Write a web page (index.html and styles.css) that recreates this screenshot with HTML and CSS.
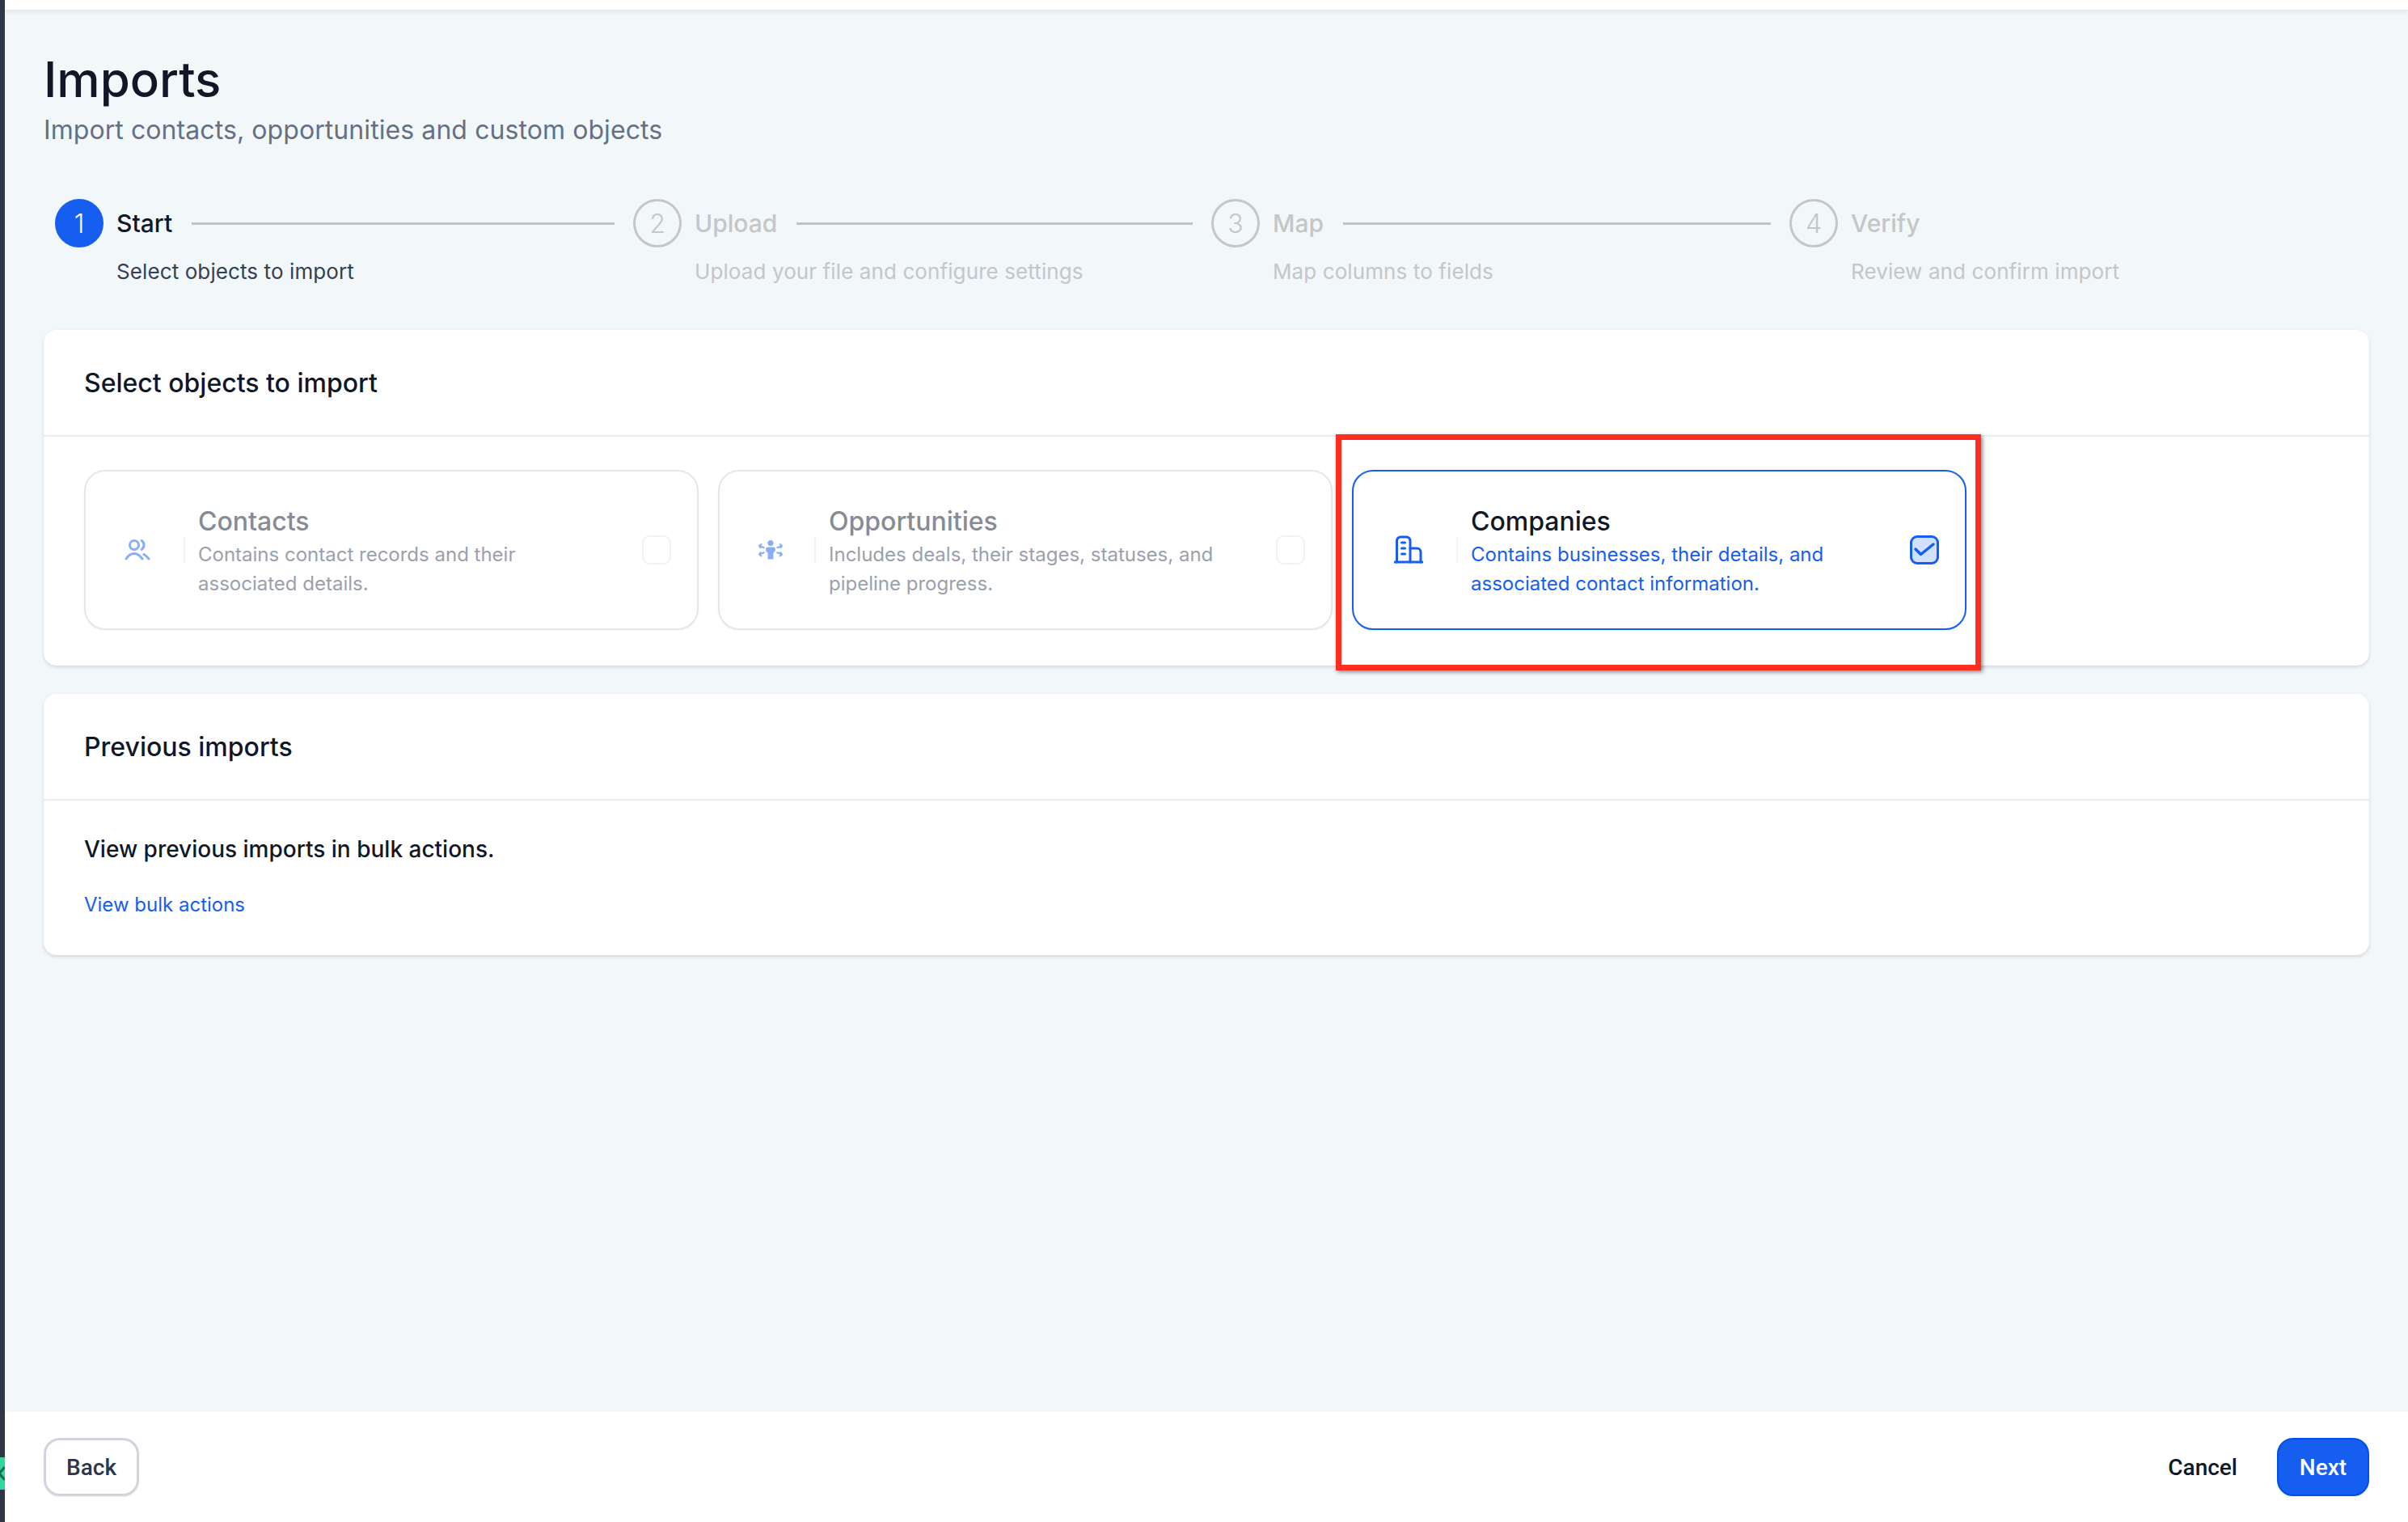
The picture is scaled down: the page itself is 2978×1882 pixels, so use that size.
FILE: index.html
```html
<!DOCTYPE html>
<html lang="en">
  <head>
    <meta charset="UTF-8" />
    <meta name="viewport" content="width=device-width, initial-scale=1.0" />
    <title>Imports</title>
    <link rel="stylesheet" href="styles.css">
  </head>
  <body>
    <div class="app">
      <div class="rail">
        <span class="rail-tab">
          <svg width="6" height="40" viewBox="0 0 6 40"><path d="M6 12 L-1 20 L6 28" fill="none" stroke="#0f6b52" stroke-width="3"/></svg>
        </span>
      </div>
      <div class="main">
        <div class="topbar"></div>
        <div class="content">
          <h1 class="title">Imports</h1>
          <p class="subtitle">Import contacts, opportunities and custom objects</p>

          <div class="steps">
            <div class="step active">
              <div class="step-row">
                <span class="step-num">1</span>
                <span class="step-name">Start</span>
                <span class="step-line"></span>
              </div>
              <div class="step-desc">Select objects to import</div>
            </div>
            <div class="step">
              <div class="step-row">
                <span class="step-num">2</span>
                <span class="step-name">Upload</span>
                <span class="step-line"></span>
              </div>
              <div class="step-desc">Upload your file and configure settings</div>
            </div>
            <div class="step">
              <div class="step-row">
                <span class="step-num">3</span>
                <span class="step-name">Map</span>
                <span class="step-line"></span>
              </div>
              <div class="step-desc">Map columns to fields</div>
            </div>
            <div class="step">
              <div class="step-row">
                <span class="step-num">4</span>
                <span class="step-name">Verify</span>
              </div>
              <div class="step-desc">Review and confirm import</div>
            </div>
          </div>

          <div class="card">
            <div class="card-head">Select objects to import</div>
            <div class="options">
              <div class="option disabled">
                <svg class="option-icon icon-contacts" width="32" height="32" viewBox="0 0 32 32" fill="none" stroke="#155eef" stroke-width="3" stroke-linecap="round">
                  <circle cx="12" cy="10" r="5.5"/>
                  <path d="M21 4.5 a6.5 6.5 0 0 1 0 11"/>
                  <path d="M2 27 C5 22.5 8.5 20.5 12 20.5 C16 20.5 19 23 22 27"/>
                  <path d="M24 21.5 C26 22.5 28 24.5 30 27"/>
                </svg>
                <span class="option-sep"></span>
                <div class="option-text">
                  <div class="option-name">Contacts</div>
                  <div class="option-desc">Contains contact records and their associated details.</div>
                </div>
                <span class="check"></span>
              </div>

              <div class="option disabled">
                <svg class="option-icon icon-opps" width="32" height="32" viewBox="0 0 32 32" fill="#155eef" stroke="none">
                  <circle cx="16" cy="7.5" r="3.6"/>
                  <path d="M13 12.5 h6 a3 3 0 0 1 3 3 c0 2-1.4 3.4-2.6 4 V27.5 h-6.8 V19.5 c-1.2-.6-2.6-2-2.6-4 a3 3 0 0 1 3-3z"/>
                  <g fill="none" stroke="#155eef" stroke-width="2">
                    <path d="M8.5 13.5 L2 11 M5 8.5 L2 11 L4 14"/>
                    <path d="M23.5 13.5 L30 11 M27 8.5 L30 11 L28 14"/>
                    <path d="M8.5 19 L2 21.5 M4 18.5 L2 21.5 L5 24"/>
                    <path d="M23.5 19 L30 21.5 M28 18.5 L30 21.5 L27 24"/>
                  </g>
                </svg>
                <span class="option-sep"></span>
                <div class="option-text">
                  <div class="option-name">Opportunities</div>
                  <div class="option-desc">Includes deals, their stages, statuses, and pipeline progress.</div>
                </div>
                <span class="check"></span>
              </div>

              <div class="option selected">
                <svg class="option-icon icon-companies" width="36" height="36" viewBox="0 0 36 36" fill="none" stroke="#155eef" stroke-width="3" stroke-linecap="round">
                  <path d="M1 33 H35"/>
                  <path d="M3.5 33 V6.5 a4.5 4.5 0 0 1 4.5-4.5 h7.5 a4.5 4.5 0 0 1 4.5 4.5 V33"/>
                  <path d="M20 16 h8.5 a4.5 4.5 0 0 1 4.5 4.5 V33"/>
                  <path d="M9.5 9 h4 M9.5 16 h4 M9.5 23 h4"/>
                </svg>
                <span class="option-sep"></span>
                <div class="option-text">
                  <div class="option-name">Companies</div>
                  <div class="option-desc">Contains businesses, their details, and associated contact information.</div>
                </div>
                <span class="check">
                  <svg width="30" height="30" viewBox="0 0 30 30" fill="none" stroke="#155eef" stroke-width="3.5" stroke-linecap="round" stroke-linejoin="round"><path d="M4 14 L10.5 20.5 L26 8"/></svg>
                </span>
              </div>
            </div>
          </div>

          <div class="card">
            <div class="card-head">Previous imports</div>
            <div class="previous">
              <p class="previous-text">View previous imports in bulk actions.</p>
              <a class="previous-link">View bulk actions</a>
            </div>
          </div>
        </div>

        <div class="footer">
          <button class="btn btn-back">Back</button>
          <div class="footer-right">
            <button class="btn btn-cancel">Cancel</button>
            <button class="btn btn-next">Next</button>
          </div>
        </div>
      </div>
    </div>
    <div class="callout"></div>
  </body>
</html>
```

FILE: styles.css
```css
* {
  margin: 0;
  padding: 0;
  box-sizing: border-box;
}
body {
  font-family: Inter, "Liberation Sans", sans-serif;
  color: #101828;
  background-color: #f2f7fa;
  overflow: hidden;
}
.app {
  display: flex;
  height: 1882px;
}
.rail {
  width: 6px;
  background-color: #2d3748;
  position: relative;
  flex-shrink: 0;
}
.rail-tab {
  position: absolute;
  left: 0;
  top: 1802px;
  width: 6px;
  height: 40px;
  background-color: #30d89a;
  display: block;
  overflow: hidden;
}
.rail-tab svg {
  display: block;
}
.main {
  flex: 1;
  display: flex;
  flex-direction: column;
  min-width: 0;
}
.topbar {
  height: 12px;
  background-color: #fff;
  box-shadow: 0 2px 6px rgba(16, 24, 40, 0.1);
}
.content {
  flex: 1;
  padding: 50px 48px 0;
}
.title {
  font-size: 60px;
  line-height: 72px;
  font-weight: 500;
  color: #101828;
}
.subtitle {
  margin-top: 5px;
  font-size: 32px;
  line-height: 44px;
  letter-spacing: 0.08px;
  color: #667085;
}

/* stepper */
.steps {
  display: grid;
  grid-template-columns: repeat(4, 715px);
  margin-top: 63px;
  padding-left: 14px;
}
.step-row {
  display: flex;
  align-items: center;
  height: 60px;
}
.step-num {
  width: 60px;
  height: 60px;
  flex-shrink: 0;
  border-radius: 50%;
  border: 3px solid #c4c6c8;
  color: #c4c6c8;
  font-size: 32px;
  font-weight: 300;
  display: flex;
  align-items: center;
  justify-content: center;
}
.step-name {
  margin-left: 16px;
  font-size: 30px;
  font-weight: 500;
  color: #c4c6c8;
}
.step-line {
  flex: 1;
  height: 3px;
  margin: 0 23px 0 24px;
  background-color: #c0c2c4;
}
.step-desc {
  margin-top: 12px;
  padding-left: 76px;
  font-size: 26px;
  line-height: 36px;
  letter-spacing: 0.1px;
  color: #c4c6c8;
}
.step.active .step-num {
  background-color: #155eef;
  border-color: #155eef;
  color: #fff;
}
.step.active .step-name {
  color: #101828;
}
.step.active .step-desc {
  color: #344054;
}

/* cards */
.card {
  background-color: #fff;
  border-radius: 16px;
  box-shadow: 0 2px 4px rgba(16, 24, 40, 0.14);
  margin-top: 54px;
}
.card + .card {
  margin-top: 35px;
}
.card-head {
  height: 132px;
  padding-left: 50px;
  display: flex;
  align-items: center;
  border-bottom: 2px solid #eaecf0;
  font-size: 32px;
  font-weight: 500;
  color: #101828;
}
.options {
  display: flex;
  gap: 24px;
  padding: 41px 50px 44px;
}
.option {
  width: 760px;
  height: 198px;
  border: 2px solid #e4e7ec;
  border-radius: 26px;
  padding: 0 32px 0 47px;
  display: flex;
  align-items: center;
  box-shadow: 0 1px 3px rgba(16, 24, 40, 0.04);
}
.option.selected {
  border-color: #155eef;
}
.option-icon {
  flex-shrink: 0;
}
.icon-contacts {
  margin-left: 1px;
  margin-right: 41px;
}
.icon-opps {
  margin-right: 38px;
}
.icon-companies {
  margin-left: 3px;
  margin-right: 41px;
}
.option-sep {
  width: 2px;
  height: 32px;
  flex-shrink: 0;
  background-color: #f2f4f7;
  margin-right: 16px;
}
.option-text {
  width: 500px;
  padding-top: 6px;
}
.option-name {
  font-size: 32px;
  line-height: 38px;
  font-weight: 500;
  color: #101828;
  margin-bottom: 4px;
}
.option-desc {
  font-size: 24px;
  line-height: 36px;
  color: #155eef;
}
.check {
  width: 36px;
  height: 36px;
  margin-left: auto;
  flex-shrink: 0;
  border-radius: 9px;
  border: 3px solid #155eef;
  background-color: #d1e0ff;
  display: flex;
  align-items: center;
  justify-content: center;
}
.disabled .option-icon {
  opacity: 0.5;
}
.disabled .option-name {
  color: #878b93;
}
.disabled .option-desc {
  color: #9aa1ad;
}
.disabled .check {
  border: 2px solid #f0f1f4;
  background-color: #fff;
}

/* previous imports */
.previous {
  padding: 40px 50px 44px;
}
.previous-text {
  font-size: 28px;
  line-height: 40px;
  font-weight: 500;
  color: #101828;
}
.previous-link {
  display: block;
  margin-top: 31px;
  font-size: 24px;
  line-height: 36px;
  color: #155eef;
}

/* footer */
.footer {
  height: 136px;
  background-color: #fff;
  padding: 32px 48px 0;
  display: flex;
  justify-content: space-between;
  align-items: flex-start;
}
.footer-right {
  display: flex;
  align-items: center;
  gap: 49px;
}
.btn {
  height: 72px;
  border-radius: 20px;
  font-family: Roboto, "Liberation Sans", sans-serif;
  font-size: 28px;
  font-weight: 500;
  background: none;
  border: none;
}
.btn-back {
  width: 118px;
  border: 3px solid #d0d5dd;
  color: #2d3748;
  background-color: #fff;
  box-shadow: 0 1px 2px rgba(16, 24, 40, 0.08);
}
.btn-cancel {
  color: #101828;
}
.btn-next {
  width: 114px;
  background-color: #155eef;
  border: 2px solid #004eeb;
  color: #fff;
  box-shadow: 0 1px 2px rgba(16, 24, 40, 0.08);
}

/* red annotation drawn over the screenshot */
.callout {
  position: absolute;
  left: 1652px;
  top: 537px;
  width: 798px;
  height: 292px;
  border: 7px solid #ff2d1f;
  box-shadow: 2px 2px 5px rgba(0, 0, 0, 0.45);
}
```
